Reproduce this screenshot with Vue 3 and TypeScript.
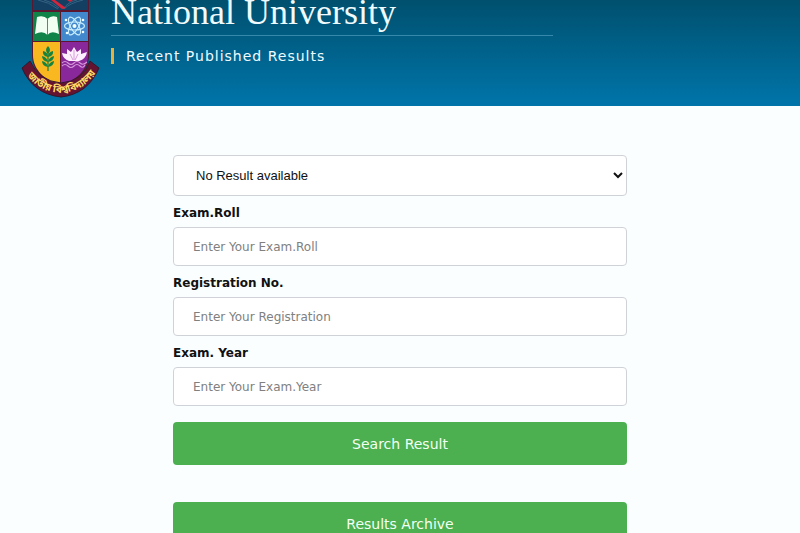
<script setup lang="ts">
import { ref } from 'vue'

interface Field {
  id: string
  label: string
  placeholder: string
}

const fields: Field[] = [
  { id: 'exam-roll', label: 'Exam.Roll', placeholder: 'Enter Your Exam.Roll' },
  { id: 'registration', label: 'Registration No.', placeholder: 'Enter Your Registration' },
  { id: 'exam-year', label: 'Exam. Year', placeholder: 'Enter Your Exam.Year' },
]

const values = ref<Record<string, string>>({ 'exam-roll': '', registration: '', 'exam-year': '' })
const exam = ref('none')
</script>

<template>
  <div class="page">
    <header class="banner">
      <svg class="emblem" viewBox="0 0 100 106" aria-hidden="true">
        <defs>
          <clipPath id="shield">
            <path d="M23 0H78V55C78 70 66 80 50.500 86C35 80 23 70 23 55Z" />
          </clipPath>
          <path id="motto" d="M14 70Q25 91 51 93Q77 91 89 67" />
        </defs>
        <path d="M22 0H79V55C79 71 67 82 50.500 88C34 82 22 71 22 55Z" fill="#5c1730" />
        <g clip-path="url(#shield)">
          <rect x="23" y="0" width="55" height="10" fill="#123f62" />
          <path d="M28 0Q39 2 48 9M34 0Q43 2 49 8M67 0Q58 2 53 9M73 0Q60 3 54 9" fill="none" stroke="#366383" stroke-width="1" />
          <path d="M41 0L45 0L56 8L52 9ZM57 0H63L60 2Z" fill="#d3263d" />
          <rect x="23" y="12" width="27" height="29" fill="#108348" />
          <rect x="51" y="12" width="27" height="29" fill="#4288cc" />
          <rect x="23" y="42" width="27" height="46" fill="#f9b820" />
          <rect x="51" y="42" width="27" height="46" fill="#88289a" />
        </g>
        <path d="M27 17Q34 15 37.500 19Q41 15 47 17L49 34Q41 30 37.500 35Q33 30 25 34Z" fill="#f1fff3" />
        <path d="M37.500 19V35" stroke="#47946b" stroke-width="1" />
        <g fill="none" stroke="#c8edff" stroke-width="1.200">
          <ellipse cx="64.500" cy="26" rx="10" ry="4" />
          <ellipse cx="64.500" cy="26" rx="10" ry="4" transform="rotate(60 64.500 26)" />
          <ellipse cx="64.500" cy="26" rx="10" ry="4" transform="rotate(120 64.500 26)" />
        </g>
        <g fill="#f2ffff">
          <circle cx="64.500" cy="26" r="2" />
          <circle cx="56" cy="20" r="1.300" />
          <circle cx="73" cy="20" r="1.300" />
          <circle cx="57" cy="33" r="1.300" />
          <circle cx="73" cy="32" r="1.300" />
        </g>
        <path d="M38 49V71" stroke="#218447" stroke-width="1.300" />
        <g fill="#16833f">
          <path d="M38 46Q34 50 38 54Q42 50 38 46Z" />
          <path d="M38 57Q32 56 33 51Q38 52 38 57ZM38 57Q44 56 43 51Q38 52 38 57Z" />
          <path d="M38 62Q32 61 32 56Q37 57 38 62ZM38 62Q44 61 44 56Q39 57 38 62Z" />
          <path d="M38 67Q32 66 32 61Q37 62 38 67ZM38 67Q44 66 44 61Q39 62 38 67Z" />
        </g>
        <path d="M64 47L67 52L71 49L71 54L77 52Q76 59 69 61H59Q53 59 52 53L57 54L57 49L61 52Z" fill="#fff0ff" />
        <path d="M64 50V60M60 54L63 60M68 54L65 60" stroke="#c37ac7" stroke-width="0.700" />
        <path d="M52 63Q55 60 58 63T64 63T70 63T77 62M52 66Q55 63 58 66T64 66T70 66T75 65" fill="none" stroke="#d697db" stroke-width="1.100" />
        <path d="M20 61Q29 81 51 83Q73 81 80 61L89 68Q78 94 51 97Q23 94 12 68Z" fill="#641431" stroke="#34182c" stroke-width="1" />
        <text class="motto"><textPath href="#motto" startOffset="50%" text-anchor="middle">জাতীয় বিশ্ববিদ্যালয়</textPath></text>
      </svg>
      <div class="heading">
        <h1>National University</h1>
        <p>Recent Published Results</p>
      </div>
    </header>

    <main>
      <form @submit.prevent>
        <select v-model="exam" aria-label="Exam">
          <option value="none">No Result available</option>
        </select>
        <div v-for="field in fields" :key="field.id" class="field">
          <label :for="field.id">{{ field.label }}</label>
          <input :id="field.id" v-model="values[field.id]" type="text" :placeholder="field.placeholder" />
        </div>
        <button type="submit">Search Result</button>
        <button type="button" class="archive">Results Archive</button>
      </form>
    </main>
  </div>
</template>

<style>
body {
  margin: 0;
  background: #fafeff;
}
</style>

<style scoped>
.page {
  height: 100vh;
  overflow: hidden;
  font-family: Verdana, "DejaVu Sans", sans-serif;
}

.banner {
  display: flex;
  align-items: flex-start;
  padding-left: 10px;
  background: linear-gradient(#00506e, #0075aa);
  color: #f0fbff;
}

.emblem {
  display: block;
  flex: none;
  width: 100px;
}

.motto {
  fill: #ffdc65;
  font-family: "Noto Sans Bengali", "Noto Sans", sans-serif;
  font-size: 10px;
  font-weight: bold;
}

.heading {
  width: 56%;
  margin-left: 1px;
}

h1 {
  margin: 0;
  padding-bottom: 11px;
  border-bottom: 1px solid #3689aa;
  font: 400 36px/24px Georgia, "Liberation Serif", serif;
}

p {
  margin: 12px 0 0;
  padding-left: 12px;
  border-left: 3px solid #e8b13c;
  font-size: 14px;
  line-height: 16px;
  letter-spacing: 1px;
}

main {
  padding-top: 49px;
}

form {
  display: flex;
  flex-direction: column;
  width: 57%;
  max-width: 454px;
  margin: 0 auto;
}

select,
input {
  box-sizing: border-box;
  width: 100%;
  border: 1px solid #cfd3d8;
  border-radius: 4px;
  background: #fff;
}

select {
  height: 41px;
  padding: 0 0 0 18px;
  color: #111;
  font: 13px "Liberation Sans", sans-serif;
}

.field {
  display: flex;
  flex-direction: column;
}

label {
  padding-top: 3px;
  color: #111;
  font-size: 12px;
  font-weight: bold;
  line-height: 28px;
}

input {
  height: 39px;
  padding: 0 19px;
  font: 12px Verdana, "DejaVu Sans", sans-serif;
}

input::placeholder {
  color: #808080;
}

button {
  height: 43px;
  flex: none;
  margin-top: 16px;
  padding: 0;
  border: 0;
  border-radius: 4px;
  background: #4caf50;
  color: #f2fff2;
  font: 14px Verdana, "DejaVu Sans", sans-serif;
}

.archive {
  margin-top: 37px;
}
</style>
